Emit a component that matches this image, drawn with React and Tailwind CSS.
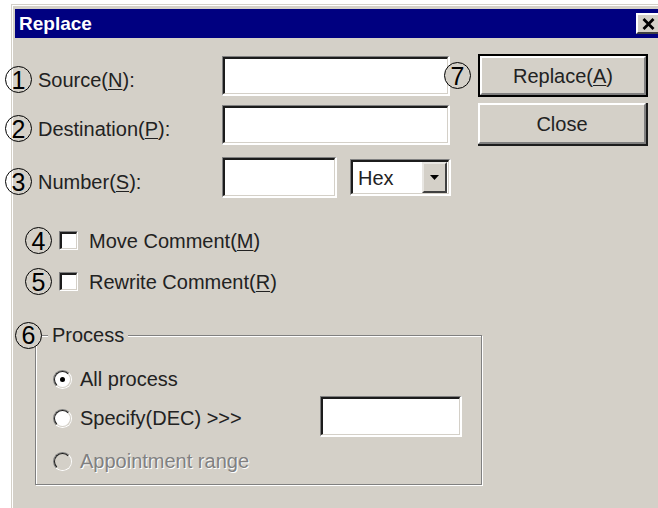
import React from "react";

// Circled annotation number
function Mark({ n, className = "" }) {
  return (
    <span
      className={`inline-flex items-center justify-center w-[27px] h-[27px] shrink-0 rounded-full border-[1.5px] border-black text-[25px] leading-none text-black pt-[1px] ${className}`}
    >
      {n}
    </span>
  );
}

// Win2000-style sunken edit field
function Field({ className = "", children }) {
  return (
    <div
      className={`shrink-0 border-t border-l border-t-[#808080] border-l-[#808080] border-b-2 border-r-2 border-b-white border-r-white ${className}`}
    >
      <div className="w-full h-full border-t-2 border-l-2 border-t-[#1c1c1c] border-l-[#1c1c1c] border-b border-r border-b-[#d4d0c8] border-r-[#d4d0c8] bg-white flex items-center">
        {children}
      </div>
    </div>
  );
}

function Button({ children, isDefault = false }) {
  const face = (
    <div className="w-full h-full border-t-2 border-l-2 border-t-white border-l-white border-b-2 border-r-2 border-b-[#808080] border-r-[#808080] flex items-center justify-center text-[20px] text-[#222]">
      {children}
    </div>
  );
  if (isDefault) {
    return (
      <div className="w-[170px] h-[43px] shrink-0 border-2 border-black">{face}</div>
    );
  }
  return (
    <div className="w-[170px] h-[43px] shrink-0 border-b-2 border-r-2 border-b-[#1c1c1c] border-r-[#1c1c1c]">
      {face}
    </div>
  );
}

function Checkbox() {
  return (
    <div className="w-[19px] h-[19px] shrink-0 border-t border-l border-t-[#808080] border-l-[#808080] border-b border-r border-b-white border-r-white">
      <div className="w-full h-full border-t-2 border-l-2 border-t-[#1c1c1c] border-l-[#1c1c1c] border-b border-r border-b-[#d4d0c8] border-r-[#d4d0c8] bg-white" />
    </div>
  );
}

function Radio({ checked = false, disabled = false }) {
  return (
    <div className="w-[19px] h-[19px] shrink-0 rounded-full border-[1.5px] border-t-[#808080] border-l-[#808080] border-r-white border-b-white">
      <div
        className={`w-full h-full rounded-full border-[1.5px] border-t-[#1c1c1c] border-l-[#1c1c1c] border-r-[#d4d0c8] border-b-[#d4d0c8] flex items-center justify-center ${
          disabled ? "bg-[#d4d0c8]" : "bg-white"
        }`}
      >
        {checked && <div className="w-[5px] h-[5px] rounded-full bg-black" />}
      </div>
    </div>
  );
}

function Key({ children }) {
  return <span className="underline underline-offset-[2px] decoration-1">{children}</span>;
}

function Label({ n, children }) {
  return (
    <div className="-ml-[10px] w-[217px] shrink-0 flex items-center pt-[8px]">
      <Mark n={n} />
      <span className="ml-[6px] text-[20px] text-[#222] leading-none">{children}</span>
    </div>
  );
}

export default function App() {
  return (
    <div className="w-[658px] h-[508px] overflow-hidden bg-white flex flex-col font-['Liberation_Sans',Arial,sans-serif]">
      <div className="ml-[11px] mt-[4px] w-[655px] flex-1 flex flex-col border-t border-l border-[#d4d0c8]">
        <div className="flex-1 flex flex-col border-t border-l border-white">
          <div className="flex-1 flex flex-col bg-[#d4d0c8] pl-[2px] pt-[3px]">
            {/* title bar */}
            <div className="h-[29px] shrink-0 bg-[#000080] flex items-center">
              <span className="pl-[4px] text-white font-bold text-[19px] leading-none">Replace</span>
              <div className="ml-auto mr-[5px] w-[25px] h-[21px] border-t-2 border-l-2 border-t-white border-l-white border-b-2 border-r-2 border-b-[#404040] border-r-[#404040] bg-[#d4d0c8] flex items-center justify-center">
                <svg width="13" height="12" viewBox="0 0 13 12">
                  <path d="M1.5 1 L11.5 11 M11.5 1 L1.5 11" stroke="black" strokeWidth="2.8" />
                </svg>
              </div>
            </div>

            {/* body */}
            <div className="flex-1 flex flex-col">
              <div className="mt-[16px] h-[43px] flex items-center">
                <Label n="1">
                  Source(<Key>N</Key>):
                </Label>
                <Field className="w-[228px] h-[40px]" />
                <Mark n="7" className="-ml-[6px] bg-[#d4d0c8]" />
                <div className="ml-[7px]">
                  <Button isDefault>
                    Replace(<Key>A</Key>)
                  </Button>
                </div>
              </div>

              <div className="mt-[6px] h-[43px] flex items-center">
                <Label n="2">
                  Destination(<Key>P</Key>):
                </Label>
                <Field className="w-[228px] h-[40px]" />
                <div className="ml-[28px]">
                  <Button>Close</Button>
                </div>
              </div>

              <div className="mt-[11px] h-[41px] flex items-center">
                <Label n="3">
                  Number(<Key>S</Key>):
                </Label>
                <Field className="w-[115px] h-[41px]" />
                <Field className="ml-[13px] w-[101px] h-[37px]">
                  <span className="pl-[5px] text-[20px] text-[#222] leading-none">Hex</span>
                  <div className="ml-auto mr-[1px] w-[25px] h-[31px] border-t-2 border-l-2 border-t-[#e8e6e2] border-l-[#e8e6e2] border-b-2 border-r-2 border-b-[#404040] border-r-[#404040] bg-[#d4d0c8] flex items-center justify-center">
                    <svg width="9" height="5" viewBox="0 0 9 5">
                      <path d="M0 0 H9 L4.5 5 Z" fill="black" />
                    </svg>
                  </div>
                </Field>
              </div>

              <div className="mt-[29px] h-[27px] flex items-center">
                <Mark n="4" className="ml-[10px]" />
                <div className="ml-[7px]">
                  <Checkbox />
                </div>
                <span className="ml-[11px] text-[20px] text-[#222] leading-none">
                  Move Comment(<Key>M</Key>)
                </span>
              </div>

              <div className="mt-[14px] h-[27px] flex items-center">
                <Mark n="5" className="ml-[10px]" />
                <div className="ml-[7px]">
                  <Checkbox />
                </div>
                <span className="ml-[11px] text-[20px] text-[#222] leading-none">
                  Rewrite Comment(<Key>R</Key>)
                </span>
              </div>

              {/* Process group */}
              <div className="mt-[40px] ml-[20px] w-[447px] h-[150px] relative border border-[#808080] shadow-[1px_1px_0_white,inset_1px_1px_0_white]">
                <div className="absolute -left-[21px] -top-[15px] h-[28px] flex items-center">
                  <Mark n="6" className="bg-[#d4d0c8]" />
                  <span className="ml-[6px] bg-[#d4d0c8] px-[4px] text-[20px] text-[#222] leading-none">
                    Process
                  </span>
                </div>

                <div className="pl-[17px] flex flex-col">
                  <div className="mt-[31px] h-[24px] flex items-center">
                    <Radio checked />
                    <span className="ml-[8px] text-[20px] text-[#222] leading-none">All process</span>
                  </div>
                  <div className="mt-[5px] h-[41px] flex items-center">
                    <div className="w-[267px] flex items-center pt-[3px]">
                      <Radio />
                      <span className="ml-[8px] text-[20px] text-[#222] leading-none">
                        Specify(DEC) &gt;&gt;&gt;
                      </span>
                    </div>
                    <Field className="w-[142px] h-[41px]" />
                  </div>
                  <div className="mt-[12px] h-[24px] flex items-center">
                    <Radio disabled />
                    <span className="ml-[8px] text-[20px] text-[#808080] leading-none [text-shadow:1px_1px_0_white]">
                      Appointment range
                    </span>
                  </div>
                </div>
              </div>
            </div>
          </div>
        </div>
      </div>
    </div>
  );
}
